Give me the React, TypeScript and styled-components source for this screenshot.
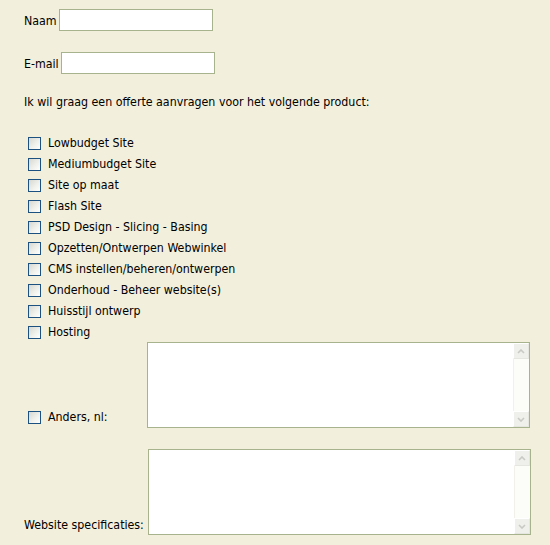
import React from 'react'
import styled, { createGlobalStyle } from 'styled-components';

const GlobalStyle = createGlobalStyle`
    html, body {
        margin: 0;
        padding: 0;
        background-color: #f2efdc;
    }
    body {
        font-family: "DejaVu Sans Condensed", "DejaVu Sans", sans-serif;
        font-stretch: condensed;
        font-size: 12.3px;
        color: #000000;
    }
`;

const products = [
    'Lowbudget Site',
    'Mediumbudget Site',
    'Site op maat',
    'Flash Site',
    'PSD Design - Slicing - Basing',
    'Opzetten/Ontwerpen Webwinkel',
    'CMS instellen/beheren/ontwerpen',
    'Onderhoud - Beheer website(s)',
    'Huisstijl ontwerp',
    'Hosting',
];

const Chevron: React.FC<{ down?: boolean }> = ({ down }) => (
    <svg width="8" height="5" viewBox="0 0 8 5">
        <path
            d={down ? 'M1 1 L4 4 L7 1' : 'M1 4 L4 1 L7 4'}
            fill="none"
            stroke="#c9c9c6"
            strokeWidth="1.6"
        />
    </svg>
);

const TextBox: React.FC = () => (
    <AreaWrap>
        <Area />
        <Scrollbar>
            <ScrollButton><Chevron /></ScrollButton>
            <Track />
            <ScrollButton><Chevron down /></ScrollButton>
        </Scrollbar>
    </AreaWrap>
);

const App: React.FC = () => {
  return (
    <>
        <GlobalStyle />
        <Form>
            <FieldRow>
                <Label>Naam</Label>
                <Input type="text" />
            </FieldRow>
            <FieldRow>
                <Label>E-mail</Label>
                <Input type="text" />
            </FieldRow>
            <Intro>Ik wil graag een offerte aanvragen voor het volgende product:</Intro>
            <CheckList>
                {products.map((p) => (
                    <CheckRow key={p}>
                        <Box type="checkbox" />
                        <span>{p}</span>
                    </CheckRow>
                ))}
            </CheckList>
            <AreaRow $top={-1}>
                <CheckRow>
                    <Box type="checkbox" />
                    <CheckLabel $width={95}>Anders, nl:</CheckLabel>
                </CheckRow>
                <TextBox />
            </AreaRow>
            <AreaRow $top={21}>
                <Label>Website specificaties:</Label>
                <TextBox />
            </AreaRow>
        </Form>
    </>
  )
}

export default App;

const Form = styled.div`
    padding: 9px 0 0 24px;
    display: flex;
    flex-direction: column;
`;
const FieldRow = styled.div`
    display: flex;
    align-items: flex-end;
    gap: 2px;
    height: 22px;
    margin-bottom: 21px;
`;
const Label = styled.span`
    line-height: 15px;
    padding-bottom: 2px;
`;
const Input = styled.input`
    width: 154px;
    height: 22px;
    box-sizing: border-box;
    border: 1px solid #a6b38c;
    background: #ffffff;
    margin: 0;
    padding: 0 3px;
    outline: none;
`;
const Intro = styled.p`
    margin: 0;
    line-height: 15px;
    height: 38px;
`;
const CheckList = styled.div`
    display: flex;
    flex-direction: column;
`;
const CheckRow = styled.label`
    display: flex;
    align-items: center;
    height: 21px;
    gap: 7px;
    padding-left: 4px;
    line-height: 15px;
`;
const CheckLabel = styled.span<{ $width: number }>`
    width: ${(p) => p.$width}px;
`;
const Box = styled.input`
    appearance: none;
    margin: 0;
    width: 13px;
    height: 13px;
    box-sizing: border-box;
    border: 1px solid #1c5180;
    background: linear-gradient(135deg, #d8d8d2 0%, #efefeb 55%, #ffffff 100%);
`;
const AreaRow = styled.div<{ $top?: number }>`
    display: flex;
    align-items: flex-end;
    gap: 4px;
    margin-top: ${(p) => p.$top ?? 0}px;
`;
const AreaWrap = styled.div`
    display: flex;
    width: 383px;
    height: 86px;
    box-sizing: border-box;
    border: 1px solid #a6b38c;
    background: #ffffff;
`;
const Area = styled.textarea`
    flex: 1;
    border: none;
    resize: none;
    outline: none;
    margin: 0;
    padding: 2px;
    overflow: hidden;
    font: inherit;
`;
const Scrollbar = styled.div`
    width: 16px;
    display: flex;
    flex-direction: column;
    background: #fcfcf8;
`;
const ScrollButton = styled.div`
    height: 16px;
    box-sizing: border-box;
    border: 1px solid #ffffff;
    border-right-color: #e6e6e0;
    border-bottom-color: #e6e6e0;
    background: #efefec;
    display: flex;
    align-items: center;
    justify-content: center;
`;
const Track = styled.div`
    flex: 1;
    border-left: 1px solid #f1f1ea;
`;
